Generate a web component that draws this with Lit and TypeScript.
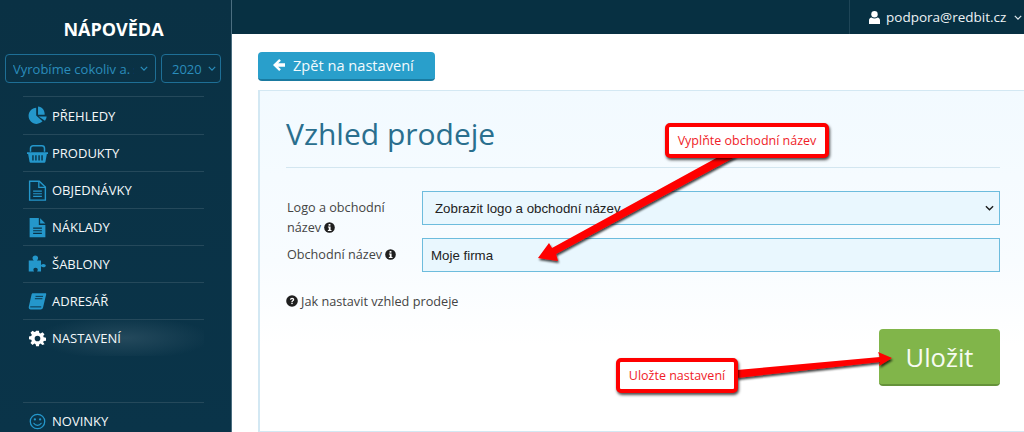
import { LitElement, html, css, svg } from "lit";
import { customElement } from "lit/decorators.js";

const icons: Record<string, unknown> = {
  pie: svg`<path d="M10.500 3.200C5.600 3.600 1.800 7.500 1.800 12.400c0 5.100 4.100 9.200 9.200 9.200 2.600 0 5-1.100 6.700-2.900l-7.200-6.600z"/><path d="M12.600 1.600v9.600l7.600-.1c.4-5-3.100-9.200-7.600-9.500z"/><path d="M13.200 13l9.200.1c-.1 1.800-.8 3.600-1.900 4.800z"/>`,
  basket: svg`<path d="M0 10.500h24v2h-1.300l-1.600 9c-.1.600-.6 1-1.200 1H4.100c-.6 0-1.100-.4-1.200-1l-1.600-9H0z"/><path fill="none" stroke="currentColor" stroke-width="1.700" d="M4 10V6.200c0-1.800 1.200-3 3-3h10c1.800 0 3 1.200 3 3V10"/><path d="M6 14h1.600v6H6zm3.400 0H11v6H9.400zm3.600 0h1.600v6H13zm3.400 0H18v6h-1.600z" fill="#0a3246"/>`,
  fileO: svg`<path fill="none" stroke="currentColor" stroke-width="1.600" d="M3 1.500h11l7 6.500v15H3z"/><path d="M13.500 1.500v7H21" fill="none" stroke="currentColor" stroke-width="1.500"/><path d="M7 12h10v1.300H7zm0 3h10v1.300H7zm0 3h10v1.300H7z"/>`,
  file: svg`<path d="M3 1h10.500v8H21v14H3z"/><path d="M15 1.500l6 6h-6z"/><path d="M7 12h10v1.300H7zm0 3h10v1.300H7zm0 3h10v1.300H7z" fill="#0a3246"/>`,
  puzzle: svg`<path d="M2 7.500h5.800c-.9-1-1.500-1.800-1.500-3 0-1.700 1.400-2.800 3.200-2.800s3.200 1.100 3.200 2.800c0 1.200-.6 2-1.500 3H16v5.200c1-.8 1.700-1.200 2.700-1.200 1.600 0 2.800 1 2.800 1.800 0 .9-1.200 1.800-2.800 1.800-1 0-1.700-.4-2.700-1.200V20h-4.500c.5-.8.800-1.300.8-2 0-1.300-1-2.200-2.500-2.200S7.300 16.700 7.300 18c0 .7.300 1.200.8 2H2z"/>`,
  book: svg`<path d="M6.500 1.500H22c.8 0 1.200.6 1 1.300l-4 16.700c-.4 1.500-1.500 2.500-3.200 2.500H3.500C1.600 22 .5 20.500 1 18.500L4.500 3c.2-.9 1-1.500 2-1.500z"/><path d="M9.500 5.500h9.500M8.700 8.500h9.500M2.800 18.800h13.900" fill="none" stroke="#0a3246" stroke-width="1.200"/>`,
  gear: svg`<path fill-rule="evenodd" d="M10 1h4l.6 3.200 1.800.7L19 3l2.900 2.900-1.900 2.700.8 1.800 3.200.6v4l-3.200.6-.8 1.800 1.900 2.700L19 21.100l-2.700-1.900-1.800.8L14 23h-4l-.6-3-1.800-.8L5 21.100 2.100 18.200 4 15.500l-.8-1.800L0 13.100v-4l3.200-.6.800-1.800L2.100 3.900 5 1l2.700 1.900 1.700-.7zM12 8a4 4 0 100 8 4 4 0 000-8z"/>`,
  smile: svg`<circle cx="12" cy="12" r="10.200" fill="none" stroke="currentColor" stroke-width="1.800"/><circle cx="8.300" cy="9" r="1.600"/><circle cx="15.700" cy="9" r="1.600"/><path d="M6.800 14.500c1.200 2 3 3 5.200 3s4-1 5.200-3" fill="none" stroke="currentColor" stroke-width="1.700" stroke-linecap="round"/>`,
};

const items: [string, string, string][] = [
  ["pie", "PŘEHLEDY", "lg"],
  ["basket", "PRODUKTY", "lg"],
  ["fileO", "OBJEDNÁVKY", "lg"],
  ["file", "NÁKLADY", "lg"],
  ["puzzle", "ŠABLONY", "lg"],
  ["book", "ADRESÁŘ", "md"],
  ["gear", "NASTAVENÍ", "sm"],
];

const chevron = html`<svg class="chev" viewBox="0 0 10 6"><path d="M1 1l4 4 4-4" fill="none" stroke="currentColor" stroke-width="1.500"/></svg>`;
const info = html`<svg class="badge" viewBox="0 0 12 12"><circle cx="6" cy="6" r="5.800" fill="#1f1f1f"/><rect x="5" y="2.200" width="2" height="1.800" fill="#fff"/><path d="M4.300 5h2.900v3.800h1v1.100H4.200V8.800h1V6.100h-.9z" fill="#fff"/></svg>`;

@customElement("app-root")
export class AppRoot extends LitElement {
  static styles = css`
    :host {
      display: block;
      width: 1024px;
      height: 432px;
      overflow: hidden;
      position: relative;
      font-family: "Open Sans", sans-serif;
      background: #fff;
    }
    .shell { display: grid; grid-template-columns: 232px 1fr; height: 432px; }
    .side {
      background: linear-gradient(180deg, #0a3144, #0a3449);
      border-right: 1px solid #4b6e80;
      box-sizing: border-box;
      height: 432px;
      overflow: hidden;
    }
    h2 {
      margin: 0;
      padding-top: 17px;
      color: #fff;
      font-size: 18px;
      line-height: 24px;
      font-weight: 700;
      text-align: center;
      padding-right: 4px;
    }
    .pickers { display: flex; gap: 5px; padding: 13px 0 0 5px; }
    .pick {
      box-sizing: border-box;
      height: 29px;
      border: 1px solid #1e6f96;
      border-radius: 4px;
      color: #2a8dbc;
      font-size: 13px;
      display: flex;
      align-items: center;
      padding-left: 7px;
      white-space: nowrap;
    }
    .pick.a { width: 151px; }
    .pick.b { width: 60px; padding-left: 10px; }
    .pick .clip { overflow: hidden; width: 121px; flex: none; }
    .chev { width: 8px; height: 5px; flex: none; margin-left: 6px; color: #2a8dbc; }
    .nav { margin: 13px 27px 0 23px; }
    .row {
      height: 37px;
      box-sizing: border-box;
      border-top: 1px solid #25495b;
      display: flex;
      align-items: center;
      color: #f4f8fa;
      font-size: 13px;
      position: relative;
    }
    .row.first { height: 38px; }
    .slot { width: 29px; flex: none; display: flex; justify-content: center; }
    .row svg { fill: currentColor; color: #2497cb; flex: none; }
    .row svg.lg { width: 21px; height: 21px; }
    .row svg.md { width: 19px; height: 19px; }
    .row svg.sm { width: 17px; height: 17px; }
    .row.active { background: radial-gradient(ellipse 48% 60% at 56% 50%, #24495c 0%, rgba(36, 73, 92, 0) 100%); }
    .row.active svg { color: #fff; }
    .row.news { margin-top: 46px; }
    .main { display: flex; flex-direction: column; min-width: 0; }
    .top {
      height: 34px;
      flex: none;
      background: #073042;
      display: flex;
      justify-content: flex-end;
      color: #eef3f5;
      font-size: 13.500px;
    }
    .user {
      width: 175px;
      box-sizing: border-box;
      border-left: 1px solid #1e4557;
      display: flex;
      align-items: center;
      padding-left: 19px;
      gap: 6px;
    }
    .user svg.u { width: 11px; height: 13px; fill: #fff; }
    .user .chev { color: #dfe8ec; margin-left: 2px; }
    .content { padding: 18px 0 0 26px; flex: 1; min-height: 0; }
    .back {
      display: flex;
      align-items: center;
      box-sizing: border-box;
      width: 177px;
      height: 29px;
      padding: 0 0 2px 14px;
      gap: 7px;
      background: #299fcb;
      border-bottom: 2px solid #1a7aa0;
      border-radius: 4px;
      color: #f2fafd;
      font-size: 14.600px;
    }
    .back svg { width: 14px; height: 14px; fill: #fff; }
    .card {
      margin-top: 9px;
      box-sizing: border-box;
      height: 342px;
      border: 1px solid #d3e8f3;
      border-left-width: 2px;
      border-right: none;
      background: linear-gradient(180deg, #f2faff 0%, #f8fcff 50%, #fff 75%);
      padding: 23px 24px 0 26px;
    }
    h1 {
      margin: 0;
      font-size: 30px;
      line-height: 40px;
      font-weight: 400;
      color: #2a6f8e;
    }
    hr { border: 0; border-top: 1px solid #d3e6f0; margin: 13px 0 23px; }
    .form { display: grid; grid-template-columns: 136px 1fr; grid-template-rows: 34px 34px; row-gap: 13px; }
    label { font-size: 12.650px; line-height: 20px; color: #444; padding: 7px 0 0 1px; display: block; }
    .form label.two { padding-top: 6px; width: 120px; }
    .form label.one { padding-top: 6px; }
    .badge { width: 11px; height: 11px; vertical-align: -1px; }
    .field {
      box-sizing: border-box;
      height: 34px;
      border: 1px solid #6dbcdd;
      background: #e9f7fe;
      font-family: "Liberation Sans", sans-serif;
      font-size: 13.300px;
      color: #222;
      display: flex;
      align-items: center;
      padding-left: 8px;
    }
    .field.sel { padding-left: 12px; justify-content: space-between; padding-right: 5px; }
    .field .chev { color: #1a1a1a; width: 9px; height: 6px; }
    .help { margin: 19px 0 0 0; font-size: 12.700px; line-height: 20px; color: #444; display: flex; align-items: center; gap: 3px; }
    .help .badge { width: 12px; height: 12px; }
    .actions { display: flex; justify-content: flex-end; margin-top: 18px; }
    .save {
      box-sizing: border-box;
      width: 121px;
      height: 57px;
      background: #81b54a;
      border-bottom: 2px solid #65923a;
      border-radius: 4px;
      color: #f7fbf2;
      font-size: 25.500px;
      display: flex;
      align-items: center;
      justify-content: center;
    }
    .overlay { position: absolute; inset: 0; pointer-events: none; }
    .overlay svg { position: absolute; inset: 0; width: 1024px; height: 432px; }
    .note {
      position: absolute;
      box-sizing: border-box;
      background: #fff;
      border: 4px solid #f00;
      border-radius: 5px;
      box-shadow: 1px 2px 3px rgba(0, 0, 0, 0.7);
      color: #f01c28;
      font-size: 12.500px;
      display: flex;
      align-items: center;
      justify-content: center;
      white-space: nowrap;
    }
    .note.n1 { left: 665px; top: 123px; width: 164px; height: 35px; }
    .note.n2 { left: 616px; top: 358px; width: 122px; height: 35px; }
  `;

  render() {
    return html`
      <div class="shell">
        <aside class="side">
          <h2>NÁPOVĚDA</h2>
          <div class="pickers">
            <div class="pick a"><span class="clip">Vyrobíme cokoliv a. s.</span>${chevron}</div>
            <div class="pick b">2020${chevron}</div>
          </div>
          <nav class="nav">
            ${items.map(
              ([ic, t, size], i) => html`<div class="row ${i === 0 ? "first" : ""} ${t === "NASTAVENÍ" ? "active" : ""}">
                <div class="slot"><svg class=${size} viewBox="0 0 24 24">${icons[ic]}</svg></div><span>${t}</span>
              </div>`
            )}
            <div class="row news"><div class="slot"><svg class="sm" viewBox="0 0 24 24">${icons.smile}</svg></div><span>NOVINKY</span></div>
          </nav>
        </aside>
        <div class="main">
          <header class="top">
            <div class="user">
              <svg class="u" viewBox="0 0 11 13"><circle cx="5.500" cy="3.300" r="3.200"/><path d="M0 13V9.500C0 7.800 1 6.800 2.500 6.500c1.800 1.300 4.200 1.300 6 0C10 6.800 11 7.800 11 9.500V13z"/></svg>
              podpora@redbit.cz ${chevron}
            </div>
          </header>
          <div class="content">
            <div class="back">
              <svg viewBox="0 0 14 14"><path d="M7.200 1L1 7l6.200 6 1.700-1.700L6.200 8.700H13V5.300H6.200l2.700-2.600z"/></svg>
              Zpět na nastavení
            </div>
            <section class="card">
              <h1>Vzhled prodeje</h1>
              <hr />
              <div class="form">
                <label class="two">Logo a obchodní název ${info}</label>
                <div class="field sel">Zobrazit logo a obchodní název ${chevron}</div>
                <label class="one">Obchodní název ${info}</label>
                <div class="field">Moje firma</div>
              </div>
              <div class="help">
                <svg class="badge" viewBox="0 0 12 12"><circle cx="6" cy="6" r="5.800" fill="#1f1f1f"/><path d="M4 4.700C4.100 3.500 5 2.800 6.100 2.800c1.200 0 2.100.8 2.100 1.800 0 1.600-1.500 1.400-1.500 2.500H5.300c0-1.700 1.500-1.600 1.500-2.400 0-.4-.3-.7-.7-.7-.5 0-.8.300-.8.800z" fill="#fff"/><rect x="5.300" y="7.700" width="1.400" height="1.400" fill="#fff"/></svg>
                Jak nastavit vzhled prodeje
              </div>
              <div class="actions"><div class="save">Uložit</div></div>
            </section>
          </div>
        </div>
      </div>
      <div class="overlay">
        <svg viewBox="0 0 1024 432">
          <defs>
            <filter id="sh" x="-10%" y="-10%" width="120%" height="130%">
              <feDropShadow dx="1" dy="2" stdDeviation="1.200" flood-color="#000" flood-opacity="0.75" />
            </filter>
          </defs>
          <path filter="url(#sh)" fill="#f00" d="M720 156L737 156 556 254 558 261 538 258 549 243 552 248z" />
          <path filter="url(#sh)" fill="#f00" d="M737 370L880 357 878 352 892 358 879 366 880 362 737 378z" />
        </svg>
        <div class="note n1">Vyplňte obchodní název</div>
        <div class="note n2">Uložte nastavení</div>
      </div>
    `;
  }
}
